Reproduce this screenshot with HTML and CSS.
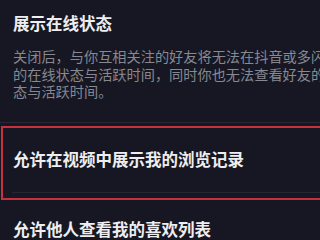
FILE: index.html
```html
<!DOCTYPE html>
<html lang="zh-CN">
<head>
<meta charset="utf-8">
<title>隐私设置</title>
<link rel="stylesheet" href="styles.css">
</head>
<body>
<div class="page">
  <section class="intro">
    <h2 class="title">展示在线状态</h2>
    <p class="desc">关闭后，与你互相关注的好友将无法在抖音或多闪看到你的在线状态与活跃时间，同时你也无法查看好友的在线状态与活跃时间。</p>
  </section>
  <div class="row">
    <span class="label">允许在视频中展示我的浏览记录</span>
    <div class="highlight"></div>
  </div>
  <div class="row">
    <span class="label">允许他人查看我的喜欢列表</span>
  </div>
</div>
</body>
</html>
```
FILE: styles.css
```css
html, body {
  margin: 0;
  padding: 0;
  background: #161722;
}
body {
  width: 320px;
  height: 240px;
  overflow: hidden;
  font-family: "Noto Sans CJK SC", "Noto Sans", sans-serif;
}
.page {
  width: 320px;
}
.intro {
  box-sizing: border-box;
  height: 123px;
  padding: 12px 0 0 13px;
  border-bottom: 1px solid #262733;
}
.title {
  margin: 0;
  font-size: 16.5px;
  line-height: 22px;
  font-weight: 700;
  color: #eeeef0;
  white-space: nowrap;
}
.desc {
  margin: 14px 0 0;
  width: 360px;
  font-size: 14.2px;
  line-height: 17.5px;
  color: #878891;
}
.row {
  position: relative;
  box-sizing: border-box;
  height: 70px;
  padding: 2px 0 0 13px;
  display: flex;
  align-items: center;
}
.row::after {
  content: "";
  position: absolute;
  left: 12px;
  right: 0;
  bottom: 0;
  height: 1px;
  background: #262733;
}
.label {
  font-size: 16.5px;
  font-weight: 700;
  color: #eeeef0;
  white-space: nowrap;
}
.highlight {
  position: absolute;
  left: 1px;
  right: -10px;
  top: 3px;
  bottom: -7px;
  border: 2px solid #c6303f;
  pointer-events: none;
}
```
